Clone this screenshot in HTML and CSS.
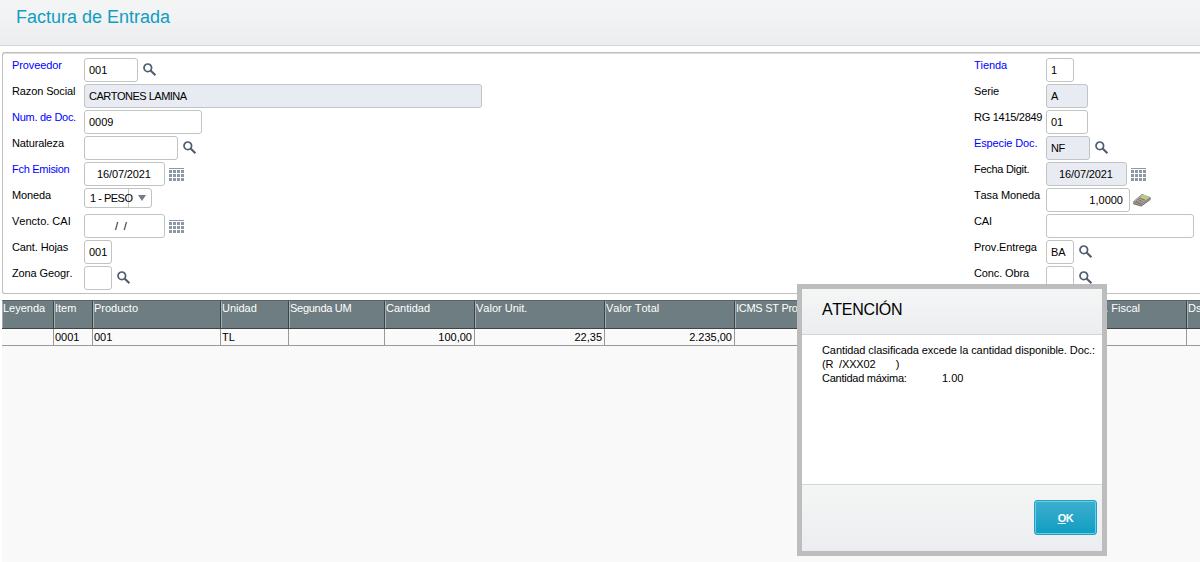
FILE: index.html
```html
<!DOCTYPE html>
<html lang="es">
<head>
    <meta charset="UTF-8">
    <meta name="viewport" content="width=device-width, initial-scale=1.0">
    <title>Factura de Entrada</title>
    <link rel="stylesheet" href="styles.css">
</head>
<body>
    <!-- Iconos reutilizables -->
    <svg class="sprite" aria-hidden="true">
        <symbol id="lupa" viewBox="0 0 14 14">
            <circle cx="4.8" cy="4.8" r="3.8" fill="none" stroke="#4f5d70" stroke-width="1.7"/>
            <path d="M7.6 7.6L12.4 12.2" stroke="#4f5d70" stroke-width="2.1"/>
        </symbol>
        <symbol id="calendario" viewBox="0 0 15 14">
            <path d="M0 .5H15" stroke="#8e97a6"/>
            <path d="M0 3.5H15M0 7.5H15M0 11.5H15" stroke="#8e97a6" stroke-width="3" stroke-dasharray="3 1"/>
        </symbol>
        <symbol id="calculadora" viewBox="0 0 18 14">
            <path d="M.3 8.6L9 1L17.6 4.2V6.8L8.4 13.4L.3 11.2Z" fill="#6f6963"/>
            <path d="M.6 8.4L9 1L17.4 4.2L8.4 10.8Z" fill="#b3aa9f"/>
            <path d="M10 1.9L15.8 3.9L13.4 6.2L8.2 4.2Z" fill="#a6d75b" stroke="#d5d6c4" stroke-width=".5"/>
            <path d="M6.4 4.9L11.4 7M4.5 6.5L9.5 8.6M2.8 8L7.6 10" stroke="#6d5f58" stroke-width="1.1" stroke-dasharray="1.4 .7"/>
            <path d="M.6 9.6L8.4 12L17.2 5.6" fill="none" stroke="#c4c0b9" stroke-width=".7"/>
        </symbol>
    </svg>

    <header class="titulo">
        <h1>Factura de Entrada</h1>
    </header>

    <!-- Cabecera del documento -->
    <section class="panel">
        <div class="columna">
            <div class="fila">
                <label class="obligatorio">Proveedor</label>
                <div class="campo w54">001</div>
                <svg class="lupa"><use href="#lupa"/></svg>
            </div>
            <div class="fila">
                <label>Razon Social</label>
                <div class="campo w398 bloqueado texto">CARTONES LAMINA</div>
            </div>
            <div class="fila">
                <label class="obligatorio compacto">Num. de Doc.</label>
                <div class="campo w118">0009</div>
            </div>
            <div class="fila">
                <label>Naturaleza</label>
                <div class="campo w94"></div>
                <svg class="lupa"><use href="#lupa"/></svg>
            </div>
            <div class="fila">
                <label class="obligatorio compacto">Fch Emision</label>
                <div class="campo w81 fecha">16/07/2021</div>
                <svg class="calendario"><use href="#calendario"/></svg>
            </div>
            <div class="fila">
                <label>Moneda</label>
                <div class="campo combo texto"><span>1 - PESO</span><i class="flecha"></i></div>
            </div>
            <div class="fila">
                <label class="natural">Vencto. CAI</label>
                <div class="campo w81 fecha vacia">/&nbsp; /</div>
                <svg class="calendario"><use href="#calendario"/></svg>
            </div>
            <div class="fila">
                <label>Cant. Hojas</label>
                <div class="campo w28">001</div>
            </div>
            <div class="fila">
                <label>Zona Geogr.</label>
                <div class="campo w28"></div>
                <svg class="lupa"><use href="#lupa"/></svg>
            </div>
        </div>

        <div class="columna derecha">
            <div class="fila">
                <label class="obligatorio">Tienda</label>
                <div class="campo w28">1</div>
            </div>
            <div class="fila">
                <label>Serie</label>
                <div class="campo w42 bloqueado">A</div>
            </div>
            <div class="fila">
                <label class="compacto">RG 1415/2849</label>
                <div class="campo w42">01</div>
            </div>
            <div class="fila">
                <label class="obligatorio">Especie Doc.</label>
                <div class="campo w44 bloqueado texto">NF</div>
                <svg class="lupa"><use href="#lupa"/></svg>
            </div>
            <div class="fila">
                <label class="compacto">Fecha Digit.</label>
                <div class="campo w81 fecha bloqueado">16/07/2021</div>
                <svg class="calendario"><use href="#calendario"/></svg>
            </div>
            <div class="fila">
                <label>Tasa Moneda</label>
                <div class="campo w84 numero">1,0000</div>
                <svg class="calculadora"><use href="#calculadora"/></svg>
            </div>
            <div class="fila">
                <label>CAI</label>
                <div class="campo w148"></div>
            </div>
            <div class="fila">
                <label>Prov.Entrega</label>
                <div class="campo w28">BA</div>
                <svg class="lupa"><use href="#lupa"/></svg>
            </div>
            <div class="fila">
                <label>Conc. Obra</label>
                <div class="campo w28"></div>
                <svg class="lupa"><use href="#lupa"/></svg>
            </div>
        </div>
    </section>

    <!-- Items de la factura -->
    <main class="items">
        <table>
            <colgroup>
                <col class="c-leyenda"><col class="c-item"><col class="c-producto"><col class="c-unidad"><col class="c-segunda">
                <col class="c-cantidad"><col class="c-valor"><col class="c-valor"><col class="c-icms"><col class="c-fiscal"><col class="c-ds">
            </colgroup>
            <thead>
                <tr>
                    <th>Leyenda</th><th>Item</th><th>Producto</th><th>Unidad</th><th class="compacto">Segunda UM</th>
                    <th>Cantidad</th><th>Valor Unit.</th><th>Valor Total</th><th class="compacto">ICMS ST Prov</th><th>Cod. Fiscal</th><th>Ds</th>
                </tr>
            </thead>
            <tbody>
                <tr>
                    <td></td><td>0001</td><td>001</td><td>TL</td><td></td>
                    <td class="numero">100,00</td><td class="numero">22,35</td><td class="numero">2.235,00</td><td></td><td></td><td></td>
                </tr>
            </tbody>
        </table>
    </main>

    <!-- Aviso -->
    <div class="aviso">
        <h2>ATENCIÓN</h2>
        <div class="mensaje">
            <p>Cantidad clasificada excede la cantidad disponible. Doc.:</p>
            <p class="compacto">(R  /XXX02       )</p>
            <p class="maximo"><span>Cantidad máxima:</span><span>1.00</span></p>
        </div>
        <div class="acciones">
            <button class="boton-ok"><u>O</u>K</button>
        </div>
    </div>
</body>
</html>
```
FILE: styles.css
```css
* {
    margin: 0;
    padding: 0;
    box-sizing: border-box;
}

body {
    height: 562px;
    display: flex;
    flex-direction: column;
    font-family: "Liberation Sans", Arial, sans-serif;
    font-size: 11px;
    font-kerning: none;
    line-height: 14px;
    color: #000;
    background-color: #fff;
    overflow: hidden;
}

.sprite {
    display: none;
}

.titulo {
    height: 46px;
    flex: none;
    padding: 6px 16px;
    background: linear-gradient(#f4f6f6, #ecedf0);
    border-bottom: 1px solid #d4d5d7;
}

.titulo h1 {
    font-size: 18px;
    font-weight: normal;
    line-height: 22px;
    color: #129dc0;
}

/* Panel de campos */
.panel {
    flex: none;
    display: flex;
    height: 242px;
    margin: 6px 0 0 2px;
    padding: 5px 0 0 9px;
    border: 1px solid #bfbfbf;
    border-right: none;
    border-radius: 3px 0 0 3px;
    box-shadow: inset 0 1px 0 #dcdcdc;
}

.columna {
    width: 962px;
    display: flex;
    flex-direction: column;
}

.columna.derecha {
    width: auto;
}

.fila {
    height: 26px;
    display: flex;
    align-items: flex-start;
}

.fila label {
    width: 72px;
    letter-spacing: -0.12px;
    white-space: nowrap;
}

.fila label.obligatorio {
    color: #0000ff;
}

.fila label.compacto {
    letter-spacing: -0.28px;
}

.fila label.natural {
    letter-spacing: 0;
}

.campo {
    height: 24px;
    padding: 0 4px;
    line-height: 22px;
    white-space: nowrap;
    border: 1px solid #c1c4c4;
    border-radius: 3px;
    background-color: #fff;
}

.campo.bloqueado {
    background-color: #e8ebf2;
}

.campo.texto {
    letter-spacing: -0.5px;
}

.campo.numero {
    padding-right: 6px;
}

.campo.fecha {
    padding-left: 12px;
    letter-spacing: -0.12px;
}

.campo.vacia {
    padding-left: 30px;
}

.numero {
    text-align: right;
}

.w28 { width: 28px; }
.w42 { width: 42px; }
.w44 { width: 44px; }
.w54 { width: 54px; }
.w81 { width: 81px; }
.w84 { width: 84px; }
.w94 { width: 94px; }
.w118 { width: 118px; }
.w148 { width: 148px; }
.w398 { width: 398px; }

.combo {
    width: 68px;
    height: 20px;
    padding: 0 5px;
    display: flex;
    align-items: center;
    justify-content: space-between;
    line-height: 18px;
    background: linear-gradient(#c4c6c8, #c4c6c8) 43px 0 / 1px 100% no-repeat #fff;
}

.flecha {
    border: 4px solid transparent;
    border-top: 6px solid #747b8b;
    border-bottom: none;
}

.lupa {
    width: 14px;
    height: 14px;
    margin: 5px 0 0 5px;
}

.calendario {
    width: 15px;
    height: 14px;
    margin: 6px 0 0 4px;
}

.calculadora {
    width: 18px;
    height: 14px;
    margin: 5px 0 0 3px;
}

/* Grilla de items */
.items {
    flex: 1;
    margin: 6px 0 0 2px;
    background-color: #f9f9f9;
    overflow: hidden;
}

.items table {
    width: 1274px;
    table-layout: fixed;
    border-collapse: separate;
    border-spacing: 0;
}

.items th {
    height: 29px;
    padding: 0 0 0 1px;
    vertical-align: top;
    text-align: left;
    font-weight: normal;
    white-space: nowrap;
    color: #fff;
    background-color: #6e7d81;
    border-top: 1px solid #57666a;
    border-right: 1px solid #3f4547;
    border-bottom: 1px solid #3f4547;
    box-shadow: inset 1px 0 0 #a3adb0;
}

.items th.compacto {
    letter-spacing: -0.28px;
}

.items td {
    height: 17px;
    padding: 0 2px 1px 1px;
    background-color: #fafafa;
    border-right: 1px solid #999;
    border-bottom: 1px solid #999;
}

.c-leyenda { width: 52px; }
.c-item { width: 39px; }
.c-producto { width: 128px; }
.c-unidad { width: 68px; }
.c-segunda { width: 96px; }
.c-cantidad { width: 90px; }
.c-valor { width: 130px; }
.c-icms { width: 349px; }
.c-fiscal { width: 103px; }
.c-ds { width: 89px; }

/* Ventana de aviso */
.aviso {
    position: absolute;
    left: 797px;
    top: 284px;
    width: 310px;
    height: 272px;
    display: flex;
    flex-direction: column;
    border: 5px solid #bdbdbd;
    background-color: #fff;
}

.aviso h2 {
    height: 46px;
    padding: 11px 20px;
    font-size: 16px;
    font-weight: normal;
    line-height: 20px;
    letter-spacing: -0.3px;
    background: linear-gradient(#f4f6f6, #ecedf0);
    border-bottom: 1px solid #d4d5d7;
}

.mensaje {
    flex: 1;
    padding: 8px 0 0 20px;
    letter-spacing: -0.08px;
    white-space: nowrap;
}

.mensaje .compacto {
    letter-spacing: -0.16px;
    white-space: pre;
}

.mensaje .maximo {
    display: flex;
    letter-spacing: -0.25px;
}

.maximo span:first-child {
    width: 120px;
}

.maximo span:last-child {
    letter-spacing: 0;
}

.acciones {
    height: 67px;
    display: flex;
    justify-content: flex-end;
    padding: 15px 5px 0 0;
    background: linear-gradient(#f4f6f5, #ecedf0);
    border-top: 1px solid #d4d5d7;
}

.boton-ok {
    width: 63px;
    height: 35px;
    font-family: inherit;
    font-size: 11px;
    font-weight: bold;
    letter-spacing: -0.5px;
    color: #fff;
    background: linear-gradient(#3eafcf, #109dc1);
    border: 1px solid #2a9dba;
    border-radius: 3px;
    box-shadow: inset 0 0 0 1px #5fd3f2;
}
```
